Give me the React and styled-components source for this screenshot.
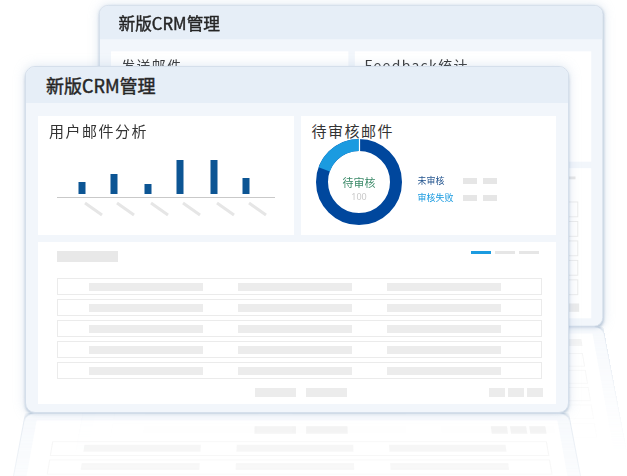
import React from 'react'
import styled, { createGlobalStyle } from 'styled-components'

const BARS = [12, 20, 10, 34, 34, 16]
const BAR_X = [25, 57, 91, 123, 157, 189]
const ROWS = [0, 1, 2, 3, 4]
const CELLS = [0, 1, 2]

const GlobalStyle = createGlobalStyle`
    html, body {
        margin: 0;
        padding: 0;
        background: #ffffff;
    }
    body {
        font-family: "Noto Sans CJK SC", "Noto Sans", sans-serif;
    }
`

const Stage = styled.div`
    position: relative;
    width: 627px;
    height: 476px;
    overflow: hidden;
    background: #ffffff;
`

// one floating dashboard window, the back one is drawn smaller
const Window = styled.div`
    position: absolute;
    left: ${props => props.$x}px;
    top: ${props => props.$y}px;
    width: 544px;
    height: 347px;
    transform: scale(${props => props.$scale});
    transform-origin: 0 0;
`

// mirrored copy lying on the "floor" under the window
const Reflection = styled.div`
    position: absolute;
    inset: 0;
    transform-origin: 50% 100%;
    transform: perspective(1000px) rotateX(35deg) scaleY(-1);
    opacity: 0.65;
    pointer-events: none;
    -webkit-mask-image: linear-gradient(to top, #000 0%, rgba(0, 0, 0, 0.6) 18%, transparent 44%);
    mask-image: linear-gradient(to top, #000 0%, rgba(0, 0, 0, 0.6) 18%, transparent 44%);
`

const Card = styled.div`
    width: 100%;
    height: 100%;
    box-sizing: border-box;
    display: flex;
    flex-direction: column;
    background: #f2f6fb;
    border: 1px solid #d5dfeb;
    border-radius: 10px;
    box-shadow: 0 2px 3px rgba(85, 120, 160, 0.35), 0 0 12px rgba(160, 185, 215, 0.35);
    overflow: hidden;
`

const Header = styled.div`
    flex: none;
    height: 36px;
    display: flex;
    align-items: center;
    padding-left: 20px;
    background: #e6eef7;
    font-size: 18px;
    font-weight: 400;
    -webkit-text-stroke: 0.45px #262626;
    color: #262626;
`

const Body = styled.div`
    flex: 1;
    display: grid;
    grid-template-columns: 1fr 1fr;
    grid-template-rows: 119px 1fr;
    gap: 7px;
    padding: 13px 12px 8px;
`

const Panel = styled.div`
    min-width: 0;
    background: #ffffff;
    grid-column: ${props => (props.$wide ? '1 / -1' : 'auto')};
`

const PanelTitle = styled.div`
    padding: 5px 0 0 11px;
    font-size: 15px;
    line-height: 20px;
    letter-spacing: 1.5px;
    color: #333333;
`

const Chart = styled.svg`
    display: block;
    margin: 14px 0 0 19px;
`

const DonutRow = styled.div`
    display: flex;
    align-items: flex-start;
    padding-left: 15px;
    margin-top: -2px;
`

const Legend = styled.div`
    display: flex;
    flex-direction: column;
    margin: 33px 0 0 16px;
`

const LegendRow = styled.div`
    display: flex;
    align-items: center;
    gap: 6px;
    height: 17px;
`

const LegendLabel = styled.span`
    width: 39px;
    font-size: 9px;
    color: ${props => props.$color};
`

const Stub = styled.span`
    width: ${props => props.$w}px;
    height: ${props => props.$h}px;
    background: ${props => props.$color || '#e6e6e6'};
`

const TableWrap = styled.div`
    padding: 9px 13px 0 19px;
`

const TableTop = styled.div`
    display: flex;
    align-items: flex-start;
    justify-content: space-between;
    padding-right: 4px;
`

const Tabs = styled.div`
    display: flex;
    gap: 4px;
`

const Rows = styled.div`
    display: flex;
    flex-direction: column;
    gap: 4px;
    margin: 16px 1px 0 0;
`

const Row = styled.div`
    height: 17px;
    box-sizing: border-box;
    display: flex;
    align-items: center;
    gap: 35px;
    padding-left: 31px;
    border: 1px solid #ebebeb;
`

const Footer = styled.div`
    display: flex;
    align-items: center;
    margin-top: 9px;
`

const PageGroup = styled.div`
    display: flex;
    gap: ${props => props.$gap}px;
    margin-left: ${props => props.$left};
`

function BarChart() {
    return (
        <Chart width="218" height="62" viewBox="0 0 218 62">
            <line x1="0" y1="42.5" x2="218" y2="42.5" stroke="#c9c9c9" strokeWidth="1" />
            {BARS.map((h, i) => (
                <rect key={i} x={BAR_X[i] - 3.5} y={39 - h} width="7" height={h} fill="#0c5594" />
            ))}
            {BAR_X.map((c, i) => (
                <line key={i} x1={c + 3} y1="48" x2={c + 20} y2="60" stroke="#e6e6e6" strokeWidth="3" />
            ))}
        </Chart>
    )
}

function Donut() {
    const c = 2 * Math.PI * 37
    return (
        <svg width="86" height="86" viewBox="0 0 86 86">
            <circle cx="43" cy="43" r="37" fill="none" stroke="#00479d" strokeWidth="12" />
            <circle
                cx="43" cy="43" r="37" fill="none" stroke="#1b9be0" strokeWidth="12"
                strokeDasharray={`${c * 0.195} ${c}`} transform="rotate(200 43 43)"
            />
            <line x1="43.5" y1="0" x2="43.5" y2="13" stroke="#ffffff" strokeWidth="1.2" />
            <text x="43" y="48" textAnchor="middle" fontSize="11" fill="#3d8b6a"
                fontFamily='"Noto Sans CJK SC", sans-serif'>待审核</text>
            <text x="43" y="61" textAnchor="middle" fontSize="9" fill="#c9c9c9"
                fontFamily='"Noto Sans", sans-serif'>100</text>
        </svg>
    )
}

function Dashboard({ first, second, content }) {
    return (
        <Card>
            <Header>新版CRM管理</Header>
            <Body>
                <Panel>
                    <PanelTitle>{first}</PanelTitle>
                    {content && <BarChart />}
                </Panel>
                <Panel>
                    <PanelTitle>{second}</PanelTitle>
                    {content && (
                        <DonutRow>
                            <Donut />
                            <Legend>
                                <LegendRow>
                                    <LegendLabel $color="#24558f">未审核</LegendLabel>
                                    <Stub $w={14} $h={6} />
                                    <Stub $w={14} $h={6} />
                                </LegendRow>
                                <LegendRow>
                                    <LegendLabel $color="#1b9be0">审核失败</LegendLabel>
                                    <Stub $w={14} $h={6} />
                                    <Stub $w={14} $h={6} />
                                </LegendRow>
                            </Legend>
                        </DonutRow>
                    )}
                </Panel>
                <Panel $wide>
                    <TableWrap>
                        <TableTop>
                            <Stub $w={61} $h={11} $color="#e8e8e8" />
                            <Tabs>
                                <Stub $w={20} $h={3} $color="#1b9be0" />
                                <Stub $w={20} $h={3} />
                                <Stub $w={20} $h={3} />
                            </Tabs>
                        </TableTop>
                        <Rows>
                            {ROWS.map(r => (
                                <Row key={r}>
                                    {CELLS.map(c => <Stub key={c} $w={114} $h={8} $color="#ececec" />)}
                                </Row>
                            ))}
                        </Rows>
                        <Footer>
                            <PageGroup $gap={10} $left="198px">
                                <Stub $w={41} $h={9} $color="#ececec" />
                                <Stub $w={41} $h={9} $color="#ececec" />
                            </PageGroup>
                            <PageGroup $gap={3} $left="auto">
                                <Stub $w={16} $h={9} $color="#ececec" />
                                <Stub $w={16} $h={9} $color="#ececec" />
                                <Stub $w={16} $h={9} $color="#ececec" />
                            </PageGroup>
                        </Footer>
                    </TableWrap>
                </Panel>
            </Body>
        </Card>
    )
}

export default function App() {
    return (
        <Stage>
            <GlobalStyle />
            <Window $x={99} $y={5} $scale={0.927}>
                <Reflection aria-hidden="true">
                    <Dashboard first="发送邮件" second="Feedback统计" />
                </Reflection>
                <Dashboard first="发送邮件" second="Feedback统计" />
            </Window>
            <Window $x={25} $y={66} $scale={1}>
                <Reflection aria-hidden="true">
                    <Dashboard first="用户邮件分析" second="待审核邮件" content />
                </Reflection>
                <Dashboard first="用户邮件分析" second="待审核邮件" content />
            </Window>
        </Stage>
    )
}
